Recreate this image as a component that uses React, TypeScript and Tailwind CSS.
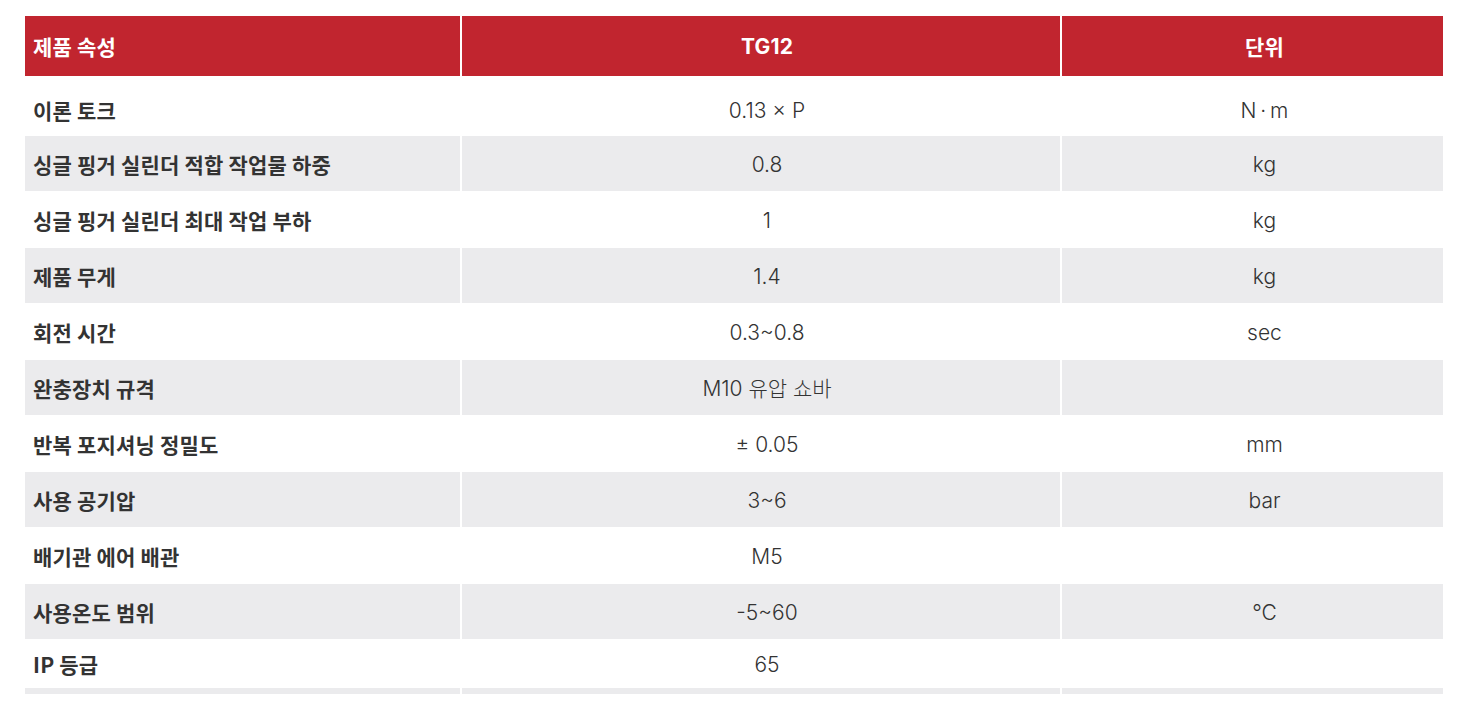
import React from 'react'

type Row = { name: string; value: string; unit: string }

const rows: Row[] = [
  { name: '이론 토크', value: '0.13 × P', unit: 'N\u2009·\u2009m' },
  { name: '싱글 핑거 실린더 적합 작업물 하중', value: '0.8', unit: 'kg' },
  { name: '싱글 핑거 실린더 최대 작업 부하', value: '1', unit: 'kg' },
  { name: '제품 무게', value: '1.4', unit: 'kg' },
  { name: '회전 시간', value: '0.3~0.8', unit: 'sec' },
  { name: '완충장치 규격', value: 'M10 유압 쇼바', unit: '' },
  { name: '반복 포지셔닝 정밀도', value: '± 0.05', unit: 'mm' },
  { name: '사용 공기압', value: '3~6', unit: 'bar' },
  { name: '배기관 에어 배관', value: 'M5', unit: '' },
  { name: '사용온도 범위', value: '-5~60', unit: '°C' },
  { name: 'IP 등급', value: '65', unit: '' },
  { name: '', value: '', unit: '' },
]

// row heights tuned to the reference, first and last rows differ
const heights = [
  'h-[58px]',
  'h-[55px]',
  'h-[55px]',
  'h-[55px]',
  'h-[55px]',
  'h-[55px]',
  'h-[55px]',
  'h-[55px]',
  'h-[55px]',
  'h-[55px]',
  'h-[47px]',
  'h-[55px]',
]

const kr = "font-['Noto_Sans_CJK_KR','Noto_Sans',sans-serif]"
const val = "font-['Inter','Noto_Sans_CJK_KR',sans-serif]"

export default function App() {
  return (
    <div className={`min-h-[712px] bg-white pt-4 pl-[25px] ${kr}`}>
      <div className="flex h-[678px] w-[1418px] flex-col gap-y-px overflow-hidden">
        <div className="grid h-[60px] shrink-0 grid-cols-[435px_598px_381px] gap-x-[2px] text-[21px] font-bold tracking-[0.2px] text-white">
          <div className="flex items-center bg-[#c1252f] pl-2 pt-[2px]">제품 속성</div>
          <div className={`flex items-center justify-center bg-[#c1252f] pl-[12px] pt-[2px] ${val}`}>TG12</div>
          <div className="flex items-center justify-center bg-[#c1252f] pl-[24px] pt-[2px]">단위</div>
        </div>
        {rows.map((row, i) => {
          const bg = i % 2 === 1 ? 'bg-[#ebebed]' : 'bg-white'
          const pad = i === 0 ? 'pt-[9px]' : 'pt-[2px]'
          return (
            <div
              key={i}
              className={`grid shrink-0 grid-cols-[435px_598px_381px] gap-x-[2px] text-[#333333] ${heights[i]}`}
            >
              <div className={`flex items-center pl-2 text-[21px] font-bold tracking-[0.2px] ${pad} ${bg}`}>
                {row.name}
              </div>
              <div className={`flex items-center justify-center pl-[12px] text-[21px] font-light ${pad} ${val} ${bg}`}>
                {row.value}
              </div>
              <div className={`flex items-center justify-center pl-[24px] text-[21px] font-light ${pad} ${val} ${bg}`}>
                {row.unit}
              </div>
            </div>
          )
        })}
      </div>
    </div>
  )
}
